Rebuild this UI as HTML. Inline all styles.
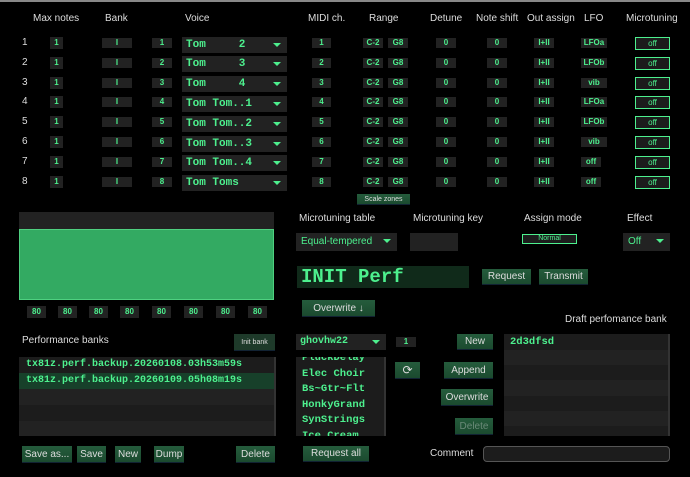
<!DOCTYPE html>
<html><head><meta charset="utf-8"><style>
*{box-sizing:border-box;margin:0;padding:0}
body{width:690px;height:477px;background:#000;position:relative;overflow:hidden;font-family:"Liberation Sans",sans-serif;color:#ddd;font-size:10px}
.a{position:absolute}
.h{position:absolute;font-size:10px;color:#ddd;white-space:nowrap}
.b{position:absolute;background:#222;color:#4df08e;font-size:8px;font-weight:bold;text-align:center;height:12px;line-height:12px}
.m{font-family:"Liberation Mono",monospace;font-weight:bold;color:#4df08e}
.dd{position:absolute;background:#222;height:16px;color:#4df08e}
.dd:after{content:"";position:absolute;right:6px;top:6px;border-left:4px solid transparent;border-right:4px solid transparent;border-top:4px solid #4df08e}
.btn{position:absolute;background:linear-gradient(#255c3c,#1b4a2f);color:#ddd;font-size:10px;text-align:center;border-bottom:1px solid #123;}
.mt{position:absolute;border:1px solid #4df08e;background:#1c1c1c;color:#4df08e;font-size:8px;text-align:center;height:13px;line-height:11px}
.n{position:absolute;color:#ddd;font-size:10px}
</style></head><body>
<div class="a" style="left:0;top:0;width:690px;height:2px;background:#888"></div>
<div class="h" style="left:33px;top:13px">Max notes</div>
<div class="h" style="left:105px;top:13px">Bank</div>
<div class="h" style="left:185px;top:13px">Voice</div>
<div class="h" style="left:308px;top:13px">MIDI ch.</div>
<div class="h" style="left:369px;top:13px">Range</div>
<div class="h" style="left:430px;top:13px">Detune</div>
<div class="h" style="left:476px;top:13px">Note shift</div>
<div class="h" style="left:527px;top:13px">Out assign</div>
<div class="h" style="left:584px;top:13px">LFO</div>
<div class="h" style="left:626px;top:13px">Microtuning</div>

<div id="rows"></div>
<script>
var v=["Tom&nbsp;&nbsp;&nbsp;&nbsp;&nbsp;2","Tom&nbsp;&nbsp;&nbsp;&nbsp;&nbsp;3","Tom&nbsp;&nbsp;&nbsp;&nbsp;&nbsp;4","Tom Tom..1","Tom Tom..2","Tom Tom..3","Tom Tom..4","Tom Toms"];
var l=["LFOa","LFOb","vib","LFOa","LFOb","vib","off","off"];
var s="";
for(var i=0;i<8;i++){var y=37+i*19.8;
s+='<div class="n" style="left:22px;top:'+(y)+'px">'+(i+1)+'</div>';
s+='<div class="b" style="left:50px;top:'+y+'px;width:13px">1</div>';
s+='<div class="b" style="left:102px;top:'+(y+1)+'px;width:30px;height:10px;line-height:10px">I</div>';
s+='<div class="b" style="left:152px;top:'+(y+1)+'px;width:20px;height:10px;line-height:10px">'+(i+1)+'</div>';
s+='<div class="dd m" style="left:182px;top:'+(y-0.5)+'px;width:105px;font-size:11px;line-height:16px;padding-left:4px">'+v[i]+'</div>';
s+='<div class="b" style="left:312px;top:'+(y+1)+'px;width:19px;height:10px;line-height:10px">'+(i+1)+'</div>';
s+='<div class="b" style="left:363px;top:'+(y+1)+'px;width:20px;height:10px;line-height:10px">C-2</div>';
s+='<div class="b" style="left:388px;top:'+(y+1)+'px;width:20px;height:10px;line-height:10px">G8</div>';
s+='<div class="b" style="left:436px;top:'+(y+1)+'px;width:20px;height:10px;line-height:10px">0</div>';
s+='<div class="b" style="left:487px;top:'+(y+1)+'px;width:20px;height:10px;line-height:10px">0</div>';
s+='<div class="b" style="left:534px;top:'+(y+1)+'px;width:20px;height:10px;line-height:10px">I+II</div>';
s+='<div class="b" style="left:581px;top:'+(y+1)+'px;width:'+(l[i]=="off"?20:26)+'px;height:10px;line-height:10px">'+l[i]+'</div>';
s+='<div class="mt" style="left:635px;top:'+y+'px;width:35px">off</div>';}
document.getElementById("rows").innerHTML=s;
</script>
<div class="btn" style="left:357px;top:194px;width:53px;height:11px;font-size:7px;line-height:11px">Scale zones</div>

<div class="a" style="left:19px;top:212px;width:255px;height:17px;background:#222"></div>
<div class="a" style="left:19px;top:229px;width:255px;height:71px;background:#33aa62;border:1px solid #4fd080"></div>
<div class="b" style="left:27px;top:306px;width:19px">80</div>
<div class="b" style="left:58px;top:306px;width:19px">80</div>
<div class="b" style="left:89px;top:306px;width:19px">80</div>
<div class="b" style="left:120px;top:306px;width:19px">80</div>
<div class="b" style="left:152px;top:306px;width:19px">80</div>
<div class="b" style="left:184px;top:306px;width:19px">80</div>
<div class="b" style="left:216px;top:306px;width:19px">80</div>
<div class="b" style="left:248px;top:306px;width:19px">80</div>

<div class="h" style="left:22px;top:335px">Performance banks</div>
<div class="btn" style="left:234px;top:334px;width:41px;height:17px;font-size:7px;line-height:17px;background:#1e3a2a">Init bank</div>
<div class="a" style="left:19px;top:357px;width:257px;height:79px;background:#1c1c1c;border-right:2px solid #333"></div>
<div class="a" style="left:19px;top:389px;width:255px;height:16px;background:#222"></div>
<div class="a" style="left:19px;top:421px;width:255px;height:15px;background:#222"></div>
<div class="a" style="left:19px;top:373px;width:255px;height:16px;background:#17402a"></div>
<div class="a m" style="left:26px;top:359px;font-size:10px">tx81z.perf.backup.20260108.03h53m59s</div>
<div class="a m" style="left:26px;top:375px;font-size:10px">tx81z.perf.backup.20260109.05h08m19s</div>

<div class="btn" style="left:22px;top:446px;width:50px;height:17px;line-height:17px">Save as...</div>
<div class="btn" style="left:77px;top:446px;width:29px;height:17px;line-height:17px">Save</div>
<div class="btn" style="left:115px;top:446px;width:26px;height:17px;line-height:17px">New</div>
<div class="btn" style="left:154px;top:446px;width:30px;height:17px;line-height:17px">Dump</div>
<div class="btn" style="left:236px;top:446px;width:39px;height:17px;line-height:17px">Delete</div>

<div class="h" style="left:299px;top:213px">Microtuning table</div>
<div class="h" style="left:413px;top:213px">Microtuning key</div>
<div class="h" style="left:524px;top:213px">Assign mode</div>
<div class="h" style="left:627px;top:213px">Effect</div>
<div class="dd" style="left:296px;top:233px;width:101px;height:18px;line-height:18px;padding-left:5px;font-size:10px">Equal-tempered</div>
<div class="a" style="left:410px;top:233px;width:48px;height:18px;background:#222"></div>
<div class="mt" style="left:522px;top:234px;width:55px;height:10px;line-height:8px;font-size:7px">Normal</div>
<div class="dd" style="left:623px;top:233px;width:47px;height:18px;line-height:18px;padding-left:5px;font-size:10px">Off</div>

<div class="a m" style="left:297px;top:266px;width:172px;height:22px;background:#102a1a;font-size:19px;line-height:22px;padding-left:4px">INIT Perf</div>
<div class="btn" style="left:482px;top:269px;width:49px;height:16px;line-height:16px">Request</div>
<div class="btn" style="left:539px;top:269px;width:49px;height:16px;line-height:16px">Transmit</div>
<div class="btn" style="left:302px;top:300px;width:73px;height:17px;line-height:17px">Overwrite ↓</div>
<div class="h" style="left:565px;top:314px">Draft perfomance bank</div>

<div class="dd m" style="left:296px;top:334px;width:90px;font-size:10px;line-height:16px;padding-left:4px">ghovhw22</div>
<div class="b" style="left:396px;top:337px;width:20px;height:10px;line-height:10px">1</div>
<div class="btn" style="left:457px;top:334px;width:36px;height:16px;line-height:16px">New</div>
<div class="a" style="left:504px;top:334px;width:166px;height:102px;background:#1c1c1c;border-right:2px solid #333"></div>
<div class="a" style="left:504px;top:350px;width:164px;height:15px;background:#222"></div>
<div class="a" style="left:504px;top:380px;width:164px;height:16px;background:#222"></div>
<div class="a" style="left:504px;top:411px;width:164px;height:15px;background:#222"></div>
<div class="a m" style="left:510px;top:336px;font-size:10.5px">2d3dfsd</div>

<div class="a" style="left:296px;top:357px;width:90px;height:79px;background:#1c1c1c;border-right:2px solid #333;overflow:hidden">
<div class="m" style="position:absolute;left:6px;top:-6px;font-size:10.5px;line-height:15.5px">PluckDelay<br>Elec Choir<br>Bs~Gtr~Flt<br>HonkyGrand<br>SynStrings<br>Ice Cream</div></div>
<div class="btn" style="left:395px;top:362px;width:25px;height:17px;line-height:17px;font-size:12px">⟳</div>
<div class="btn" style="left:444px;top:362px;width:49px;height:17px;line-height:17px">Append</div>
<div class="btn" style="left:441px;top:389px;width:52px;height:17px;line-height:17px">Overwrite</div>
<div class="btn" style="left:455px;top:418px;width:38px;height:17px;line-height:17px;color:#6a8a78">Delete</div>

<div class="btn" style="left:303px;top:446px;width:66px;height:16px;line-height:16px">Request all</div>
<div class="h" style="left:430px;top:448px">Comment</div>
<div class="a" style="left:483px;top:446px;width:187px;height:16px;background:#1c1c1c;border:1px solid #555;border-radius:4px"></div>
</body></html>
